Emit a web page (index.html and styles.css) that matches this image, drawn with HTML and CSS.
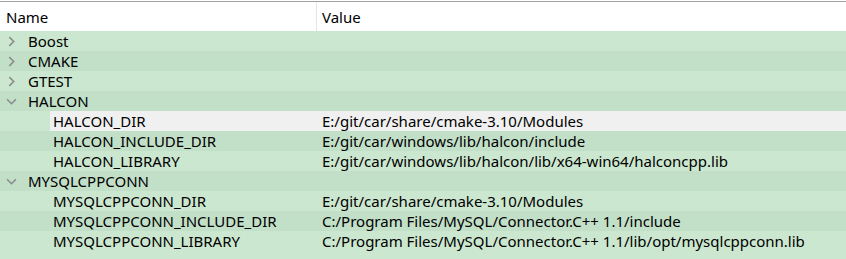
FILE: index.html
```html
<!DOCTYPE html>
<html>
<head>
	<meta charset="utf-8">
	<title>CMake cache</title>
	<link rel="stylesheet" href="styles.css">
</head>
<body>
	<div class="view">
		<div class="head">
			<div class="col name">Name</div>
			<div class="col value">Value</div>
		</div>
		<div class="row">
			<div class="name"><svg class="arrow" viewBox="0 0 10 10"><polyline points="3,1 7,5 3,9"/></svg>Boost</div>
			<div class="value"></div>
		</div>
		<div class="row alt">
			<div class="name"><svg class="arrow" viewBox="0 0 10 10"><polyline points="3,1 7,5 3,9"/></svg>CMAKE</div>
			<div class="value"></div>
		</div>
		<div class="row">
			<div class="name"><svg class="arrow" viewBox="0 0 10 10"><polyline points="3,1 7,5 3,9"/></svg>GTEST</div>
			<div class="value"></div>
		</div>
		<div class="row alt">
			<div class="name"><svg class="arrow" viewBox="0 0 10 10"><polyline points="1,3 5,7 9,3"/></svg>HALCON</div>
			<div class="value"></div>
		</div>
		<div class="row selected">
			<div class="name child">HALCON_DIR</div>
			<div class="value">E:/git/car/share/cmake-3.10/Modules</div>
		</div>
		<div class="row alt">
			<div class="name child">HALCON_INCLUDE_DIR</div>
			<div class="value">E:/git/car/windows/lib/halcon/include</div>
		</div>
		<div class="row">
			<div class="name child">HALCON_LIBRARY</div>
			<div class="value">E:/git/car/windows/lib/halcon/lib/x64-win64/halconcpp.lib</div>
		</div>
		<div class="row alt">
			<div class="name"><svg class="arrow" viewBox="0 0 10 10"><polyline points="1,3 5,7 9,3"/></svg>MYSQLCPPCONN</div>
			<div class="value"></div>
		</div>
		<div class="row">
			<div class="name child">MYSQLCPPCONN_DIR</div>
			<div class="value">E:/git/car/share/cmake-3.10/Modules</div>
		</div>
		<div class="row alt">
			<div class="name child">MYSQLCPPCONN_INCLUDE_DIR</div>
			<div class="value">C:/Program Files/MySQL/Connector.C++ 1.1/include</div>
		</div>
		<div class="row">
			<div class="name child">MYSQLCPPCONN_LIBRARY</div>
			<div class="value">C:/Program Files/MySQL/Connector.C++ 1.1/lib/opt/mysqlcppconn.lib</div>
		</div>
	</div>
</body>
</html>
```
FILE: styles.css
```css
body{
	margin: 0;
	background: #ffffff;
	font-family: "Noto Sans", "Open Sans", sans-serif;
	font-size: 15px;
	color: #000000;
}
.view{
	margin-top: 1px;
	height: 258px;
	background: #cce7cf;
	overflow: hidden;
}
.head{
	display: grid;
	grid-template-columns: 316px 1fr;
	height: 29px;
	border-top: 1px solid #a0a0a0;
	background: #ffffff;
}
.head .col{
	display: flex;
	align-items: center;
	padding-left: 6px;
}
.head .value{
	border-left: 1px solid #e5e5e5;
	padding-left: 5px;
}
.row{
	display: grid;
	grid-template-columns: 317px 1fr;
	height: 20px;
	line-height: 20px;
	white-space: nowrap;
}
.row.alt{
	background: #c2dfc8;
}
.row .name{
	display: flex;
	align-items: center;
	padding-left: 6px;
}
.row .value{
	padding-left: 5px;
}
.arrow{
	width: 11px;
	height: 11px;
	margin-right: 11px;
	fill: none;
	stroke: #8a8a8a;
	stroke-width: 1.4;
}
.row .name.child{
	margin-left: 50px;
	padding-left: 3px;
}
.row.selected{
	background: linear-gradient(to right, #cce7cf 50px, #f0f0f0 50px);
}
```
